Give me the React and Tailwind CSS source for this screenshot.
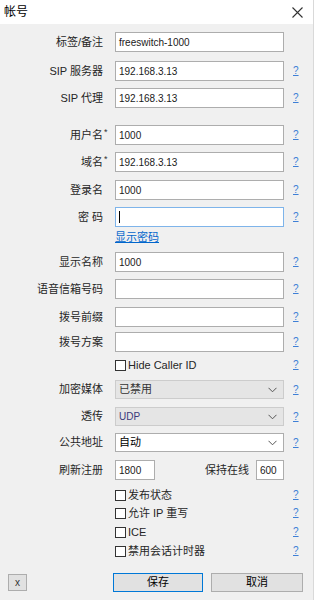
import React from "react";

const Help = () => (
  <span className="ml-[9px] w-[8px] text-[10px] leading-none text-[#3d7fd6] underline font-['Liberation_Sans',sans-serif]">?</span>
);

const Label = ({ children, star }) => (
  <div className="relative w-[103px] shrink-0 text-right text-[11px] leading-none text-[#262626] mr-[12px]">
    {children}
    {star && <span className="absolute left-[104px] top-[-2px] text-[9px] text-[#333]">*</span>}
  </div>
);

const Input = ({ value, focused, w = "w-[169px]", cursor }) => (
  <div
    className={`${w} h-[20px] shrink-0 bg-white border ${focused ? "border-[#7eb4ea]" : "border-[#adadad]"} flex items-center px-[3px] text-[10px] text-[#1a1a1a] font-['Liberation_Sans',sans-serif]`}
  >
    {cursor ? <span className="w-px h-[12px] bg-black" /> : value}
  </div>
);

const Row = ({ label, star, value, focused, cursor, mt, help = true }) => (
  <div className={`flex items-center ${mt}`}>
    <Label star={star}>{label}</Label>
    <Input value={value} focused={focused} cursor={cursor} />
    {help && <Help />}
  </div>
);

const Chevron = () => (
  <svg width="9" height="6" viewBox="0 0 9 6" className="shrink-0">
    <path d="M0.5 0.8 L4.5 4.8 L8.5 0.8" fill="none" stroke="#555" strokeWidth="1" />
  </svg>
);

const Select = ({ label, value, disabled, mt, valueClass = "" }) => (
  <div className={`flex items-center ${mt}`}>
    <Label>{label}</Label>
    <div
      className={`w-[169px] h-[19px] shrink-0 border flex items-center justify-between pl-[3px] pr-[6px] text-[11px] ${
        disabled ? "bg-[#e5e5e5] border-[#cccccc]" : "bg-white border-[#adadad]"
      }`}
    >
      <span className={valueClass}>{value}</span>
      <Chevron />
    </div>
    <Help />
  </div>
);

const Check = ({ label, mt, help = true }) => (
  <div className={`flex items-center h-[14px] ${mt}`}>
    <div className="w-[103px] mr-[12px] shrink-0" />
    <div className="w-[11px] h-[11px] border border-[#333333] bg-white shrink-0" />
    <span className="ml-[2px] w-[156px] text-[11px] leading-none text-[#262626]">{label}</span>
    {help && <Help />}
  </div>
);

export default function App() {
  return (
    <div className="w-[314px] h-[600px] bg-[#f0f0f0] font-['Liberation_Sans','Noto_Sans_CJK_SC',sans-serif] flex flex-col border-r border-[#d9d9d9] overflow-hidden">
      <div className="h-[24px] bg-white flex items-center justify-between pl-[4px] pr-[10px] shrink-0">
        <span className="text-[12px] text-black">帐号</span>
        <svg width="11" height="11" viewBox="0 0 11 11">
          <path d="M0.5 0.5 L10.5 10.5 M10.5 0.5 L0.5 10.5" stroke="#333" strokeWidth="1.1" />
        </svg>
      </div>

      <Row label="标签/备注" value="freeswitch-1000" mt="mt-[8px]" help={false} />
      <Row label="SIP 服务器" value="192.168.3.13" mt="mt-[9px]" />
      <Row label="SIP 代理" value="192.168.3.13" mt="mt-[7px]" />

      <Row label="用户名" star value="1000" mt="mt-[17px]" />
      <Row label="域名" star value="192.168.3.13" mt="mt-[7px]" />
      <Row label="登录名" value="1000" mt="mt-[8px]" />
      <Row label="密 码" cursor focused mt="mt-[7px]" />
      <div className="flex mt-[3px] h-[14px] items-center">
        <div className="w-[115px] shrink-0" />
        <span className="text-[11px] leading-none text-[#0066cc] underline">显示密码</span>
      </div>

      <Row label="显示名称" value="1000" mt="mt-[8px]" />
      <Row label="语音信箱号码" mt="mt-[7px]" />
      <Row label="拨号前缀" mt="mt-[8px]" />
      <Row label="拨号方案" mt="mt-[5px]" />
      <Check label="Hide Caller ID" mt="mt-[6px]" />

      <Select label="加密媒体" value="已禁用" disabled mt="mt-[8px]" valueClass="text-[#333]" />
      <Select label="透传" value="UDP" disabled mt="mt-[8px]" valueClass="text-[10px] text-[#3a3a7a] font-['Liberation_Sans',sans-serif]" />
      <Select label="公共地址" value="自动" mt="mt-[7px]" valueClass="text-black" />

      <div className="flex items-center mt-[8px]">
        <Label>刷新注册</Label>
        <Input value="1800" w="w-[40px]" />
        <span className="ml-[50px] text-[11px] leading-none text-[#262626]">保持在线</span>
        <div className="ml-[7px]">
          <Input value="600" w="w-[28px]" />
        </div>
      </div>

      <Check label="发布状态" mt="mt-[8px]" />
      <Check label="允许 IP 重写" mt="mt-[4px]" />
      <Check label="ICE" mt="mt-[5px]" />
      <Check label="禁用会话计时器" mt="mt-[5px]" />

      <div className="flex items-center mt-[15px]">
        <div className="ml-[8px] w-[19px] h-[17px] bg-[#e1e1e1] border border-[#adadad] flex items-center justify-center text-[10px] leading-none text-[#333] font-['Liberation_Sans',sans-serif]">
          x
        </div>
        <div className="ml-[86px] w-[90px] h-[19px] bg-[#e1e1e1] border border-[#0078d7] flex items-center justify-center text-[11px] leading-none text-black">
          保存
        </div>
        <div className="ml-[8px] w-[92px] h-[19px] bg-[#e1e1e1] border border-[#adadad] flex items-center justify-center text-[11px] leading-none text-black">
          取消
        </div>
      </div>
    </div>
  );
}
